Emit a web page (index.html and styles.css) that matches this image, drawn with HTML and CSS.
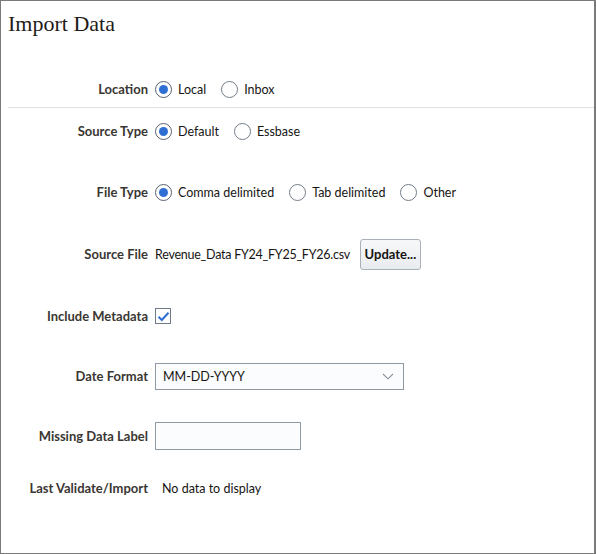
FILE: index.html
```html
<!DOCTYPE html>
<html>
<head>
<meta charset="utf-8">
<link rel="stylesheet" href="styles.css">
</head>
<body>
<div class="panel">
  <h1 class="title">Import Data</h1>
  <div class="form">
    <div class="row row-location">
      <div class="label">Location</div>
      <div class="control">
        <label class="radio"><span class="dot on"></span><span>Local</span></label>
        <label class="radio"><span class="dot"></span><span>Inbox</span></label>
      </div>
    </div>
    <div class="sep"></div>
    <div class="row row-source">
      <div class="label">Source Type</div>
      <div class="control">
        <label class="radio"><span class="dot on"></span><span>Default</span></label>
        <label class="radio"><span class="dot"></span><span>Essbase</span></label>
      </div>
    </div>
    <div class="row gap">
      <div class="label">File Type</div>
      <div class="control">
        <label class="radio"><span class="dot on"></span><span>Comma delimited</span></label>
        <label class="radio"><span class="dot"></span><span>Tab delimited</span></label>
        <label class="radio"><span class="dot"></span><span>Other</span></label>
      </div>
    </div>
    <div class="row gap-wide">
      <div class="label">Source File</div>
      <div class="control">
        <span class="value filename">Revenue_Data FY24_FY25_FY26.csv</span>
        <button class="btn">Update...</button>
      </div>
    </div>
    <div class="row gap-wide">
      <div class="label">Include Metadata</div>
      <div class="control">
        <span class="check"><svg width="13" height="11" viewBox="0 0 13 11"><path d="M1.5 5.8 L4.8 9 L11.5 1.8" fill="none" stroke="#2f6fd4" stroke-width="2"/></svg></span>
      </div>
    </div>
    <div class="row gap2">
      <div class="label">Date Format</div>
      <div class="control">
        <div class="select"><span>MM-DD-YYYY</span><svg width="12" height="7" viewBox="0 0 12 7"><path d="M1 1 L6 5.8 L11 1" fill="none" stroke="#8a929c" stroke-width="1.1"/></svg></div>
      </div>
    </div>
    <div class="row gap2">
      <div class="label">Missing Data Label</div>
      <div class="control">
        <div class="input"></div>
      </div>
    </div>
    <div class="row gap3">
      <div class="label">Last Validate/Import</div>
      <div class="control">
        <span class="value indent">No data to display</span>
      </div>
    </div>
  </div>
</div>
</body>
</html>
```
FILE: styles.css
```css
html, body {
  margin: 0;
  padding: 0;
  background: #ffffff;
}
.panel {
  box-sizing: border-box;
  width: 596px;
  height: 554px;
  border: 1px solid #7a7a7a;
  border-right-width: 2px;
  background: #ffffff;
  font-family: "Lato", "Liberation Sans", sans-serif;
  font-size: 12.5px;
  color: #161513;
}
.title {
  margin: 10px 0 0 7px;
  font-family: "Liberation Serif", serif;
  font-weight: normal;
  font-size: 22px;
  line-height: 26px;
  color: #1f1b17;
}
.form {
  margin-top: 36px;
}
.row {
  display: flex;
  align-items: center;
  height: 32px;
}
.label {
  width: 147px;
  flex: none;
  text-align: right;
  font-weight: bold;
  font-size: 13px;
  color: #3a3733;
}
.control {
  display: flex;
  align-items: center;
  margin-left: 7px;
}
.sep {
  height: 1px;
  background: #dde1e6;
  margin: 2px 0 7px 7px;
}
.gap { margin-top: 29px; }
.gap-wide { margin-top: 30px; }
.gap2 { margin-top: 28px; }
.gap3 { margin-top: 20px; }
.radio {
  display: flex;
  align-items: center;
  margin-right: 15px;
  color: #161513;
}
.dot {
  box-sizing: border-box;
  width: 17px;
  height: 17px;
  border: 1px solid #737d89;
  border-radius: 50%;
  margin-right: 6px;
  display: flex;
  align-items: center;
  justify-content: center;
  background: #fff;
}
.dot.on {
  border-color: #58626e;
}
.dot.on::after {
  content: "";
  width: 9px;
  height: 9px;
  border-radius: 50%;
  background: #2f6fd4;
}
.value {
  color: #161513;
}
.filename {
  letter-spacing: -0.25px;
}
.indent {
  margin-left: 7px;
}
.btn {
  margin-left: 10px;
  box-sizing: border-box;
  height: 31px;
  width: 61px;
  padding: 0;
  border: 1px solid #a9b0b8;
  border-radius: 3px;
  background: linear-gradient(#f7f8f9, #e9ecef);
  font-family: "Lato", "Liberation Sans", sans-serif;
  font-weight: bold;
  font-size: 13px;
  color: #161513;
}
.check {
  box-sizing: border-box;
  width: 16px;
  height: 16px;
  border: 1px solid #6f7b89;
  display: flex;
  align-items: center;
  justify-content: center;
  background: #fff;
}
.select {
  box-sizing: border-box;
  width: 249px;
  height: 27px;
  border: 1px solid #8f99a4;
  background: #fbfcfd;
  display: flex;
  align-items: center;
  justify-content: space-between;
  padding: 0 9px 0 7px;
}
.input {
  box-sizing: border-box;
  width: 146px;
  height: 28px;
  border: 1px solid #8f99a4;
  background: #fbfcfd;
}
```
